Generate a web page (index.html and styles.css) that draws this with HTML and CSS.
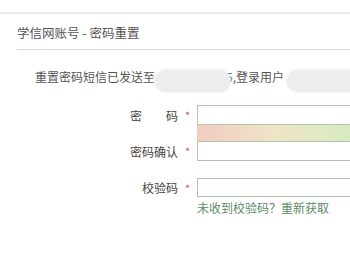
FILE: index.html
```html
<!DOCTYPE html>
<html lang="zh-CN">
<head>
    <meta charset="UTF-8">
    <meta name="viewport" content="width=device-width, initial-scale=1.0">
    <title>学信网账号 - 密码重置</title>
    <link rel="stylesheet" href="styles.css">
</head>
<body>
    <div class="top-bar"></div>
    <div class="panel">
        <h2 class="panel-title">学信网账号 - 密码重置</h2>

        <!-- 手机号和用户名已打码 -->
        <p class="msg-sent">
            <span>重置密码短信已发送至</span>
            <span class="mask mask-phone"></span>
            <span>5,登录用户</span>
            <span class="mask mask-user"></span>
        </p>

        <form class="reset-form">
            <div class="field">
                <label for="pwd" class="field-label label-spread">密<span>码</span></label>
                <span class="req">*</span>
                <input type="password" id="pwd">
            </div>
            <div class="strength"></div>
            <div class="field">
                <label for="pwd2" class="field-label">密码确认</label>
                <span class="req">*</span>
                <input type="password" id="pwd2">
            </div>
            <div class="field field-code">
                <label for="code" class="field-label">校验码</label>
                <span class="req">*</span>
                <input type="text" id="code">
            </div>
            <p class="code-tip">未收到校验码？重新获取</p>
        </form>
    </div>
</body>
</html>
```

FILE: styles.css
```css
* {
    box-sizing: border-box;
}

body {
    margin: 0;
    font-family: "Noto Sans CJK SC", "Liberation Sans", sans-serif;
    font-size: 12px;
    color: #555;
    background-color: #fff;
}

.top-bar {
    height: 14px;
    border-bottom: 2px solid #e9eded;
}

.panel {
    padding-left: 17px;
}

.panel-title {
    margin: 0;
    padding: 10px 0 7px;
    font-size: 12.5px;
    font-weight: normal;
    line-height: 18px;
    color: #555;
    border-bottom: 1px solid #d3dcd9;
}

.msg-sent {
    display: flex;
    align-items: flex-start;
    margin: 19px 0 0;
    padding-left: 18px;
    line-height: 16px;
    color: #555;
    white-space: nowrap;
}

/* 打码块 */
.mask {
    flex: none;
    display: inline-block;
    height: 22px;
    margin-top: 1px;
    border-radius: 11px;
    background-color: #ededee;
    box-shadow: 0 0 3px 1px #f2f2f2;
}

.mask-phone {
    width: 75px;
    margin-right: -4px;
    position: relative;
}

/* 右侧被窗口截断 */
.mask-user {
    flex: 1;
    margin-left: 3px;
    border-radius: 11px 0 0 11px;
}

.reset-form {
    margin-top: 13px;
}

.field {
    display: flex;
    align-items: center;
}

.field > * {
    flex: none;
}

.field-label {
    width: 161px;
    text-align: right;
    color: #444;
}

.label-spread span {
    margin-left: 24px;
}

.req {
    width: 19px;
    padding-left: 7px;
    font-size: 11px;
    color: #d9534f;
}

/* 输入框右侧被窗口截断 */
.field input {
    width: 153px;
    height: 20px;
    padding: 0 4px;
    border: 1px solid #adc8a8;
    border-right: none;
    background-color: #fff;
    outline: none;
}

.strength {
    width: 153px;
    height: 16px;
    margin-left: 180px;
    background: linear-gradient(to right, #f3cbc1, #f0e3c6 50%, #d6ebc3);
}

.field-code {
    margin-top: 17px;
}

.field-code input {
    height: 19px;
}

.code-tip {
    margin: 3px 0 0 180px;
    line-height: 16px;
    color: #5e8b6b;
}
```
